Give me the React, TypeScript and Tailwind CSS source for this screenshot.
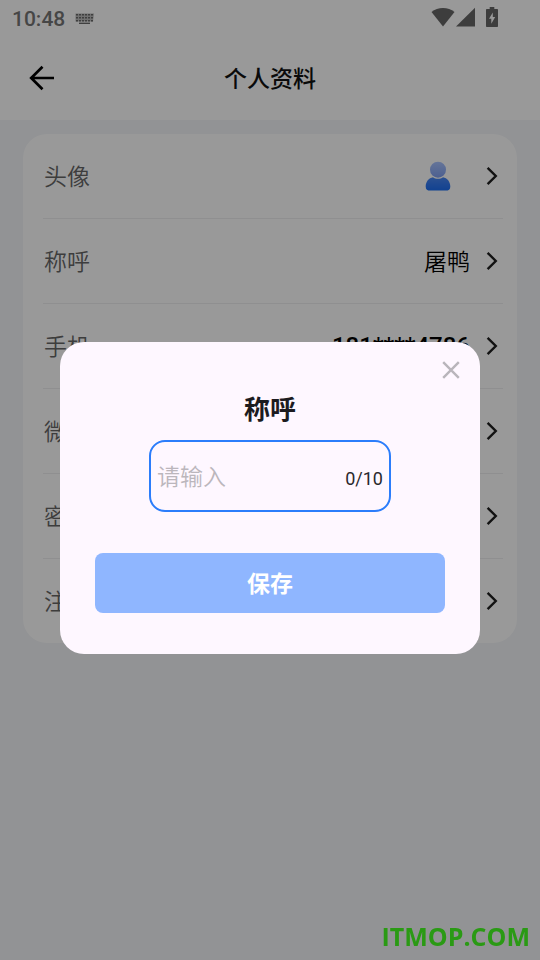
import { useState } from "react";
import type { ReactNode } from "react";

type Row = { label: string; value?: ReactNode };

function Avatar() {
  return (
    <svg width="26" height="30" viewBox="0 0 26 30" className="mr-[19px]" role="img" aria-label="头像">
      <defs>
        <linearGradient id="head" x1="0" y1="0" x2="0" y2="1">
          <stop offset="0" stopColor="#a9c3ff" />
          <stop offset="1" stopColor="#7f9ff0" />
        </linearGradient>
        <linearGradient id="body" x1="0" y1="0" x2="0" y2="1">
          <stop offset="0" stopColor="#4a86f2" />
          <stop offset="1" stopColor="#1c6ef2" />
        </linearGradient>
      </defs>
      <circle cx="13" cy="8.7" r="8" fill="url(#head)" />
      <path
        d="M8 16.200c1.400 1 3 1.600 5 1.600s3.600-.6 5-1.600c4.200.8 7.300 4.400 7.300 9.300 0 3-1.600 4.100-4.600 4.100H5.300c-3 0-4.600-1.100-4.600-4.100 0-4.900 3.100-8.500 7.300-9.300z"
        fill="url(#body)"
      />
    </svg>
  );
}

function Chevron() {
  return (
    <svg width="12" height="20" viewBox="0 0 12 20" fill="none" stroke="#1f1f1f" strokeWidth="2.4">
      <path d="M1.600 1.800 9.800 10l-8.200 8.200" />
    </svg>
  );
}

function KeyboardIcon() {
  const keys = [0, 3, 6, 9, 12, 15];
  return (
    <svg width="20" height="12" viewBox="0 0 20 12" fill="#6a6a6a">
      <path d="M0.500 0.500h18.500l-1 8h-17.500z" fill="#bdbdbd" />
      {keys.map((x) => (
        <g key={x}>
          <rect x={x + 1} y="1" width="2" height="1.500" />
          <rect x={x + 1} y="4" width="2" height="1.500" />
          <rect x={x + 1} y="7" width="2" height="1.500" />
        </g>
      ))}
      <rect x="4" y="9.600" width="11" height="1.400" />
    </svg>
  );
}

function StatusBar() {
  return (
    <div className="flex h-9 items-center justify-between pl-3 pr-[42px]">
      <div className="flex items-center gap-2.5 pt-0.5">
        <span className="text-[21px] font-medium leading-6 text-[#757575]">10:48</span>
        <KeyboardIcon />
      </div>
      <div className="flex items-center pb-0.5 text-[#666666]">
        <svg width="24" height="20" viewBox="0 0 24 20" fill="currentColor">
          <path d="M0.500 5C3.700 2.200 7.600.9 12 .9S20.300 2.200 23.500 5L12 19.500z" />
        </svg>
        <svg width="20" height="20" viewBox="0 0 20 20" fill="currentColor" className="ml-px">
          <path d="M0 19.500 19 .7v18.800z" />
        </svg>
        <svg width="12" height="20" viewBox="0 0 12 20" className="ml-2.5">
          <path
            d="M3.700 0h4.600v2H11c.6 0 1 .4 1 1v16c0 .6-.4 1-1 1H1c-.6 0-1-.4-1-1V3c0-.6.4-1 1-1h2.700z"
            fill="currentColor"
          />
          <path d="M6.800 5.500 3 11.800h2.300v5L9.200 10H6.800z" fill="#fff" />
        </svg>
      </div>
    </div>
  );
}

const rows: Row[] = [
  { label: "头像", value: <Avatar /> },
  { label: "称呼", value: <span className="block pt-1 font-[350]">屠鸭</span> },
  { label: "手机", value: <span className="block text-2xl font-medium leading-8">181****4786</span> },
  { label: "微信" },
  { label: "密码" },
  { label: "注销" },
];

export default function App() {
  const [name, setName] = useState("");
  const [open, setOpen] = useState(true);

  return (
    <div className="min-h-screen bg-[#f3f5f8] font-[Roboto,'Noto_Sans_CJK_SC',sans-serif]">
      <header className="bg-white">
        <StatusBar />
        <div className="grid h-[84px] grid-cols-[48px_1fr_48px] items-center px-[18px]">
          <button type="button" aria-label="返回" className="flex h-12 w-12 items-center justify-center">
            <svg width="26" height="26" viewBox="0 0 26 26" fill="none" stroke="#000" strokeWidth="2.700">
              <path d="M25 13H3M13.500 1.700 2.200 13l11.300 11.300" />
            </svg>
          </button>
          <h1 className="pt-1 text-center text-[23px] font-medium leading-8 text-[#111]">个人资料</h1>
        </div>
      </header>

      <main className="px-[23px] pt-3.5">
        <ul className="rounded-3xl bg-white pl-5 pr-3.5">
          {rows.map((row) => (
            <li key={row.label} className="border-b border-[#eeeef0] last:border-b-0">
              <button
                type="button"
                onClick={() => setOpen(true)}
                className="flex h-[84px] w-full items-center pl-px pr-[5px] text-[23px] leading-8"
              >
                <span className="pt-1 font-[350] text-[#666]">{row.label}</span>
                <span className="ml-auto mr-4 text-black">{row.value}</span>
                <Chevron />
              </button>
            </li>
          ))}
        </ul>
      </main>

      {open && (
        <div className="fixed inset-0 flex items-center justify-center bg-black/40 px-[60px] pt-9">
          <form
            role="dialog"
            aria-labelledby="dialog-title"
            onSubmit={(e) => {
              e.preventDefault();
              setOpen(false);
            }}
            className="flex w-full flex-col rounded-3xl bg-[#fef7ff] px-[35px] pb-[41px] pt-4"
          >
            <button
              type="button"
              aria-label="关闭"
              onClick={() => setOpen(false)}
              className="-mr-[18px] flex h-6 w-6 items-center justify-center self-end"
            >
              <svg width="18" height="18" viewBox="0 0 18 18" fill="none" stroke="#b9b5bb" strokeWidth="2.400">
                <path d="M1.200 1.200l15.600 15.600M16.800 1.200 1.200 16.800" />
              </svg>
            </button>
            <h2 id="dialog-title" className="mt-2.5 text-center text-[26px] font-bold leading-9 text-[#1c1b1f]">
              称呼
            </h2>
            <div className="mx-[54px] mt-3 flex h-[72px] items-center rounded-2xl border-2 border-[#2b7dfb] px-1.5">
              <input
                type="text"
                aria-label="称呼"
                placeholder="请输入"
                maxLength={10}
                value={name}
                onChange={(e) => setName(e.target.value)}
                className="h-10 w-0 min-w-0 flex-1 bg-transparent pt-0.5 text-[23px] font-[350] text-[#1c1b1f] outline-none placeholder:text-[#bbb6bc]"
              />
              <span className="pt-1.5 text-lg leading-6 text-[#2a282d]">{name.length}/10</span>
            </div>
            <button
              type="submit"
              className="mt-[41px] h-[60px] rounded-lg bg-[#8fb6ff] pt-1 text-[23px] font-bold leading-8 text-white"
            >
              保存
            </button>
          </form>
        </div>
      )}

      <div className="fixed bottom-2 right-2.5 font-['Open_Sans',sans-serif] text-[25px] font-bold leading-8 text-[#2a9a14]">
        ITMOP.COM
      </div>
    </div>
  );
}
